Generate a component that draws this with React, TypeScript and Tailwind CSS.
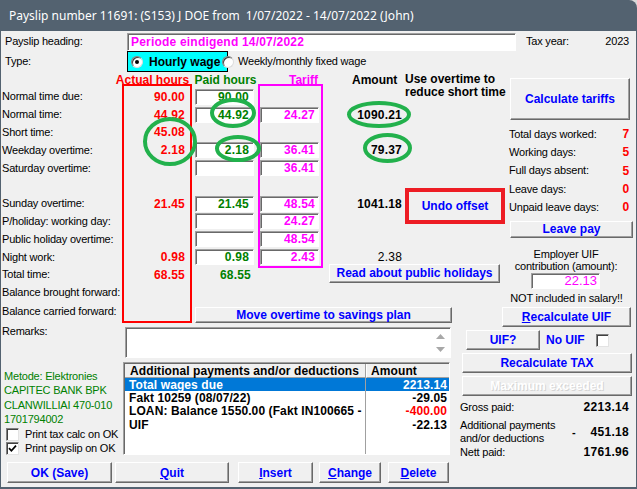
import React from 'react';

const btn =
  'flex items-center justify-center bg-[#f0f0f0] border border-t-white border-l-white border-r-[#696969] border-b-[#696969] shadow-[inset_-1px_-1px_0_#a0a0a0] text-[12px] font-bold text-[#0000ff] leading-none whitespace-nowrap tracking-normal';
const field =
  'flex items-center bg-white border border-t-[#a0a0a0] border-l-[#a0a0a0] border-r-white border-b-white shadow-[inset_1px_1px_0_#696969]';

type Row = {
  label: string;
  actual?: string;
  paid?: string | null;
  paidText?: string;
  tariff?: string | null;
  amount?: string;
  amountRegular?: boolean;
  c6: 'none' | 'empty' | 'undo' | 'read';
};

const rows: Row[] = [
  { label: 'Normal time due:', actual: '90.00', paid: '90.00', tariff: null, c6: 'none' },
  { label: 'Normal time:', actual: '44.92', paid: '44.92', tariff: '24.27', amount: '1090.21', c6: 'empty' },
  { label: 'Short time:', actual: '45.08', paid: null, tariff: null, c6: 'empty' },
  { label: 'Weekday overtime:', actual: '2.18', paid: '2.18', tariff: '36.41', amount: '79.37', c6: 'empty' },
  { label: 'Saturday overtime:', paid: '', tariff: '36.41', c6: 'empty' },
  { label: '', paid: null, tariff: null, c6: 'undo' },
  { label: 'Sunday overtime:', actual: '21.45', paid: '21.45', tariff: '48.54', amount: '1041.18', c6: 'none' },
  { label: 'P/holiday: working day:', paid: '', tariff: '24.27', c6: 'none' },
  { label: 'Public holiday overtime:', paid: '', tariff: '48.54', c6: 'empty' },
  { label: 'Night work:', actual: '0.98', paid: '0.98', tariff: '2.43', amount: '2.38', amountRegular: true, c6: 'empty' },
  { label: 'Total time:', actual: '68.55', paid: null, paidText: '68.55', tariff: null, c6: 'read' },
  { label: 'Balance brought forward:', paid: null, tariff: null, c6: 'empty' },
];

const days = [
  ['Total days worked:', '7'],
  ['Working days:', '5'],
  ['Full days absent:', '5'],
  ['Leave days:', '0'],
  ['Unpaid leave days:', '0'],
];

const list = [
  { text: 'Total wages due', amount: '2213.14', selected: true },
  { text: 'Fakt 10259 (08/07/22)', amount: '-29.05' },
  { text: 'LOAN: Balance 1550.00 (Fakt IN100665 -', amount: '-400.00', red: true },
  { text: 'UIF', amount: '-22.13' },
];

const Radio = ({ checked }: { checked?: boolean }) => (
  <div className="w-[12px] h-[12px] rounded-full bg-white border border-t-[#808080] border-l-[#808080] border-r-[#dcdcdc] border-b-[#dcdcdc] shadow-[inset_1px_1px_0_#404040] flex items-center justify-center shrink-0 relative z-10">
    {checked && <div className="w-[4px] h-[4px] rounded-full bg-black" />}
  </div>
);

const Check = ({ checked, className = '' }: { checked?: boolean; className?: string }) => (
  <div
    className={`w-[13px] h-[13px] bg-white border border-t-[#808080] border-l-[#808080] border-r-[#e3e3e3] border-b-[#e3e3e3] shadow-[inset_1px_1px_0_#404040] flex items-center justify-center shrink-0 ${className}`}
  >
    {checked && (
      <svg width="9" height="9" viewBox="0 0 9 9">
        <path d="M1 4.2 L3.4 6.8 L8 1.6" stroke="#000" strokeWidth="1.7" fill="none" />
      </svg>
    )}
  </div>
);

const num = 'font-bold text-[12px] tracking-[0.2px]';

export default function App() {
  return (
    <div className="relative w-[637px] h-[489px] overflow-hidden bg-[#d9d9d9] font-['Liberation_Sans',Arial,sans-serif] text-[11px] tracking-[-0.2px] text-black leading-none">
      {/* Title bar */}
      <div className="h-[31px] bg-[#536270] rounded-tr-[8px] flex items-center pl-[9px] text-white text-[12px] tracking-normal font-['Noto_Sans',sans-serif] whitespace-pre">
        Payslip number 11691: (S153) J DOE from  1/07/2022 - 14/07/2022 (John)
      </div>

      {/* Body */}
      <div className="h-[458px] bg-[#f0f0f0] shadow-[inset_1px_0_0_#536270,inset_-1px_0_0_#536270,inset_0_-2px_0_#536270] flex flex-col">
        {/* Heading row */}
        <div className="h-[20px] flex items-start shrink-0">
          <div className="w-[127px] pl-[5px] h-[20px] flex items-center">Payslip heading:</div>
          <div className={`${field} mt-[2px] w-[389px] h-[18px] pl-[3px] text-[#ff00ff] font-bold text-[12px] tracking-[0.2px]`}>
            Periode eindigend 14/07/2022
          </div>
          <div className="ml-[10px] h-[20px] flex items-center">Tax year:</div>
          <div className="flex-1 h-[20px] flex items-center justify-end pr-[8px]">2023</div>
        </div>

        {/* Type row */}
        <div className="h-[21px] flex items-center shrink-0">
          <div className="w-[127px] pl-[5px]">Type:</div>
          <div className="w-[101px] h-[21px] bg-[#00ffff] border border-black flex items-center pl-[3px] gap-[6px]">
            <Radio checked />
            <span className="font-bold text-[12px] tracking-normal">Hourly wage</span>
          </div>
          <div className="-ml-[6px]">
            <Radio />
          </div>
          <span className="ml-[4px]">Weekly/monthly fixed wage</span>
        </div>

        {/* Upper region */}
        <div className="h-[230px] flex shrink-0">
          <div className="w-[505px] grid grid-cols-[122px_70px_65px_65px_82px_101px] grid-rows-[16px_repeat(12,17.8px)]">
            <div />
            <div className="flex items-center justify-center pr-[9px] text-[#ff0000] font-bold text-[12px] tracking-normal whitespace-nowrap">
              Actual hours
            </div>
            <div className="flex items-center justify-center pl-[2px] text-[#008000] font-bold text-[12px] tracking-normal whitespace-nowrap">
              Paid hours
            </div>
            <div className="flex items-center pl-[32px] text-[#ff00ff] font-bold text-[12px] tracking-normal">Tariff</div>
            <div className="flex items-center pl-[30px] font-bold text-[12px] tracking-normal">Amount</div>
            <div className="row-span-2 pl-[1px] pt-[1px] font-bold text-[12px] tracking-normal leading-[12.5px] whitespace-nowrap">
              Use overtime to
              <br />
              reduce short time
            </div>

            {rows.map((r, i) => (
              <React.Fragment key={i}>
                <div className="pl-[2px] flex items-center whitespace-nowrap">{r.label}</div>
                <div className={`flex items-center justify-end pr-[7px] text-[#ff0000] ${num}`}>{r.actual}</div>
                <div className="flex items-center">
                  {r.paid != null ? (
                    <div className={`${field} ml-[3px] w-[59px] h-[16px] justify-end pr-[4px] text-[#008000] ${num}`}>{r.paid}</div>
                  ) : r.paidText ? (
                    <div className={`w-full text-right pr-[6px] text-[#008000] ${num}`}>{r.paidText}</div>
                  ) : null}
                </div>
                <div className="flex items-center">
                  {r.tariff != null && (
                    <div className={`${field} ml-[3px] w-[59px] h-[16px] justify-end pr-[3px] text-[#ff00ff] ${num}`}>{r.tariff}</div>
                  )}
                </div>
                {r.c6 === 'read' ? (
                  <div className="col-span-2 flex items-start">
                    <div className={`${btn} ml-[7px] -mt-[2px] w-[171px] h-[19px]`}>Read about public holidays</div>
                  </div>
                ) : (
                  <div
                    className={`flex items-center justify-end pr-[2px] ${
                      r.amountRegular ? 'text-[12px] tracking-[0.2px]' : num
                    }`}
                  >
                    {r.amount}
                  </div>
                )}
                {r.c6 === 'empty' && <div />}
                {r.c6 === 'undo' && (
                  <div className="row-span-3 flex items-center">
                    <div className="ml-[1px] mt-[4px] w-[102px] h-[36px] border-4 border-[#ed1c24] flex items-center justify-center text-[#0000ff] font-bold text-[12px] tracking-normal">
                      Undo offset
                    </div>
                  </div>
                )}
              </React.Fragment>
            ))}
          </div>

          {/* Upper right panel */}
          <div className="w-[132px] flex flex-col pt-[6px]">
            <div className={`${btn} ml-[5px] w-[120px] h-[42px] shrink-0`}>Calculate tariffs</div>
            <div className="mt-[5px] flex flex-col">
              {days.map(([l, v]) => (
                <div key={l} className="h-[18.3px] flex items-center justify-between pl-[4px] pr-[8px]">
                  <span className="whitespace-nowrap">{l}</span>
                  <span className="text-[#ff0000] font-bold text-[12px]">{v}</span>
                </div>
              ))}
            </div>
            <div className={`${btn} mt-[4.5px] ml-[5px] w-[123px] h-[17px] shrink-0`}>Leave pay</div>
            <div className="mt-[10px] pr-[10px] text-center leading-[12px] whitespace-nowrap">
              Employer UIF
              <br />
              contribution (amount):
            </div>
            <div className={`${field} mt-[1px] ml-[26px] w-[69px] h-[16px] shrink-0 justify-end pr-[2px] text-[#ff00ff] text-[13px] tracking-normal`}>
              22.13
            </div>
            <div className="mt-[3px] pr-[9px] text-center leading-[12px] whitespace-nowrap">NOT included in salary!!</div>
          </div>
        </div>

        {/* Lower region */}
        <div className="flex flex-1">
          <div className="w-[455px] flex flex-col">
            <div className="h-[22px] flex items-start shrink-0">
              <div className="w-[195px] pl-[2px] h-[18px] flex items-center whitespace-nowrap">Balance carried forward:</div>
              <div className={`${btn} mt-[5px] w-[257px] h-[16px]`}>Move overtime to savings plan</div>
            </div>
            <div className="h-[34px] flex items-start shrink-0">
              <div className="w-[125px] pl-[2px] h-[14px] flex items-center">Remarks:</div>
              <div className={`${field} mt-[3px] w-[326px] h-[31px] relative`}>
                <svg className="absolute right-[4px] top-[5px]" width="11" height="20" viewBox="0 0 11 20">
                  <path d="M5.5 1 L10 6 L1 6 Z" fill="#a8a8a8" />
                  <path d="M1 14 L10 14 L5.5 19 Z" fill="#a8a8a8" />
                </svg>
              </div>
            </div>
            <div className="h-[100px] flex shrink-0">
              <div className="w-[123px] pt-[11px] flex flex-col">
                {['Metode: Elektronies', 'CAPITEC BANK BPK', 'CLANWILLIAI 470-010', '1701794002'].map((t) => (
                  <div key={t} className="h-[14.5px] flex items-center pl-[4px] text-[#008000] whitespace-nowrap">
                    {t}
                  </div>
                ))}
                <div className="h-[14.5px] flex items-center pl-[6px] gap-[6px] whitespace-nowrap">
                  <Check />
                  Print tax calc on OK
                </div>
                <div className="h-[14.5px] flex items-center pl-[6px] gap-[6px] whitespace-nowrap">
                  <Check checked />
                  Print payslip on OK
                </div>
              </div>
              <div className="mt-[4px] w-[327px] h-[93px] bg-white border border-t-[#a0a0a0] border-l-[#a0a0a0] border-r-white border-b-white shadow-[inset_1px_1px_0_#696969] pt-[1px] pl-[1px] flex font-bold text-[12px] tracking-[0.1px]">
                <div className="w-[241px] flex flex-col border-r border-[#a0a0a0]">
                  <div className="h-[14px] bg-[#f0f0f0] border-b border-[#a0a0a0] flex items-center pl-[5px] whitespace-nowrap">
                    Additional payments and/or deductions
                  </div>
                  {list.map((l) => (
                    <div
                      key={l.text}
                      className={`h-[13.3px] flex items-center pl-[4px] whitespace-nowrap ${
                        l.selected ? 'bg-[#0078d7] text-white' : ''
                      }`}
                    >
                      {l.text}
                    </div>
                  ))}
                </div>
                <div className="flex-1 flex flex-col">
                  <div className="h-[14px] bg-[#f0f0f0] border-b border-[#a0a0a0] border-l border-l-white flex items-center pl-[4px]">
                    Amount
                  </div>
                  {list.map((l) => (
                    <div
                      key={l.text}
                      className={`h-[13.3px] flex items-center justify-end pr-[2px] ${
                        l.selected ? 'bg-[#0078d7] text-white' : l.red ? 'text-[#ff0000]' : ''
                      }`}
                    >
                      {l.amount}
                    </div>
                  ))}
                </div>
              </div>
            </div>
            <div className="mt-[4px] h-[21px] flex shrink-0">
              <div className={`${btn} ml-[7px] w-[105px] h-[21px]`}>OK (Save)</div>
              <div className={`${btn} ml-[3px] w-[114px] h-[21px]`}>
                <span className="underline">Q</span>uit
              </div>
              <div className={`${btn} ml-[9px] w-[75px] h-[21px]`}>
                <span className="underline">I</span>nsert
              </div>
              <div className={`${btn} ml-[6px] w-[62px] h-[21px]`}>
                <span className="underline">C</span>hange
              </div>
              <div className={`${btn} ml-[7px] w-[61px] h-[21px]`}>
                <span className="underline">D</span>elete
              </div>
            </div>
          </div>

          {/* Lower right panel */}
          <div className="w-[182px] flex flex-col">
            <div className={`${btn} mt-[5px] ml-[47px] w-[129px] h-[20px] shrink-0`}>
              <span className="underline">R</span>ecalculate UIF
            </div>
            <div className="mt-[3px] h-[20px] flex items-center shrink-0">
              <div className={`${btn} ml-[11px] w-[74px] h-[20px]`}>UIF?</div>
              <span className="ml-[6px] text-[#0000ff] font-bold text-[12px] tracking-normal">No UIF</span>
              <Check className="ml-[11px]" />
            </div>
            <div className={`${btn} mt-[3px] ml-[7px] w-[170px] h-[20px] shrink-0`}>Recalculate TAX</div>
            <div
              className={`${btn} mt-[3px] ml-[7px] w-[170px] h-[20px] shrink-0 !text-white [text-shadow:1px_1px_0_#d4d4d4]`}
            >
              Maximum exceeded
            </div>
            <div className="mt-[3px] h-[16px] flex items-center justify-between pl-[5px] pr-[8px]">
              <span>Gross paid:</span>
              <span className="font-bold text-[12px] tracking-[0.3px]">2213.14</span>
            </div>
            <div className="mt-[4px] h-[26px] flex items-center pl-[5px] pr-[8px]">
              <div className="leading-[13px] w-[112px] whitespace-nowrap">
                Additional payments
                <br />
                and/or deductions
              </div>
              <span className="font-bold">-</span>
              <span className="flex-1 text-right font-bold text-[12px] tracking-[0.3px]">451.18</span>
            </div>
            <div className="h-[14px] flex items-center justify-between pl-[5px] pr-[8px]">
              <span>Nett paid:</span>
              <span className="font-bold text-[12px] tracking-[0.3px]">1761.96</span>
            </div>
          </div>
        </div>
      </div>

      {/* Annotations drawn over the dialog */}
      <svg className="absolute inset-0 pointer-events-none" width="637" height="489" viewBox="0 0 637 489">
        <rect x="123" y="85" width="68" height="237" fill="none" stroke="#ff0000" strokeWidth="2" />
        <rect x="259" y="85" width="63" height="182" fill="none" stroke="#ff00ff" strokeWidth="2" />
        <g fill="none" stroke="#22b14c" strokeWidth="4">
          <ellipse cx="233" cy="113" rx="21" ry="13" />
          <ellipse cx="170" cy="141.5" rx="25" ry="22.5" />
          <ellipse cx="238" cy="148.5" rx="21" ry="11.5" />
          <ellipse cx="379" cy="114.5" rx="30" ry="11.5" />
          <ellipse cx="387.5" cy="148" rx="22.5" ry="13" />
        </g>
      </svg>
    </div>
  );
}
